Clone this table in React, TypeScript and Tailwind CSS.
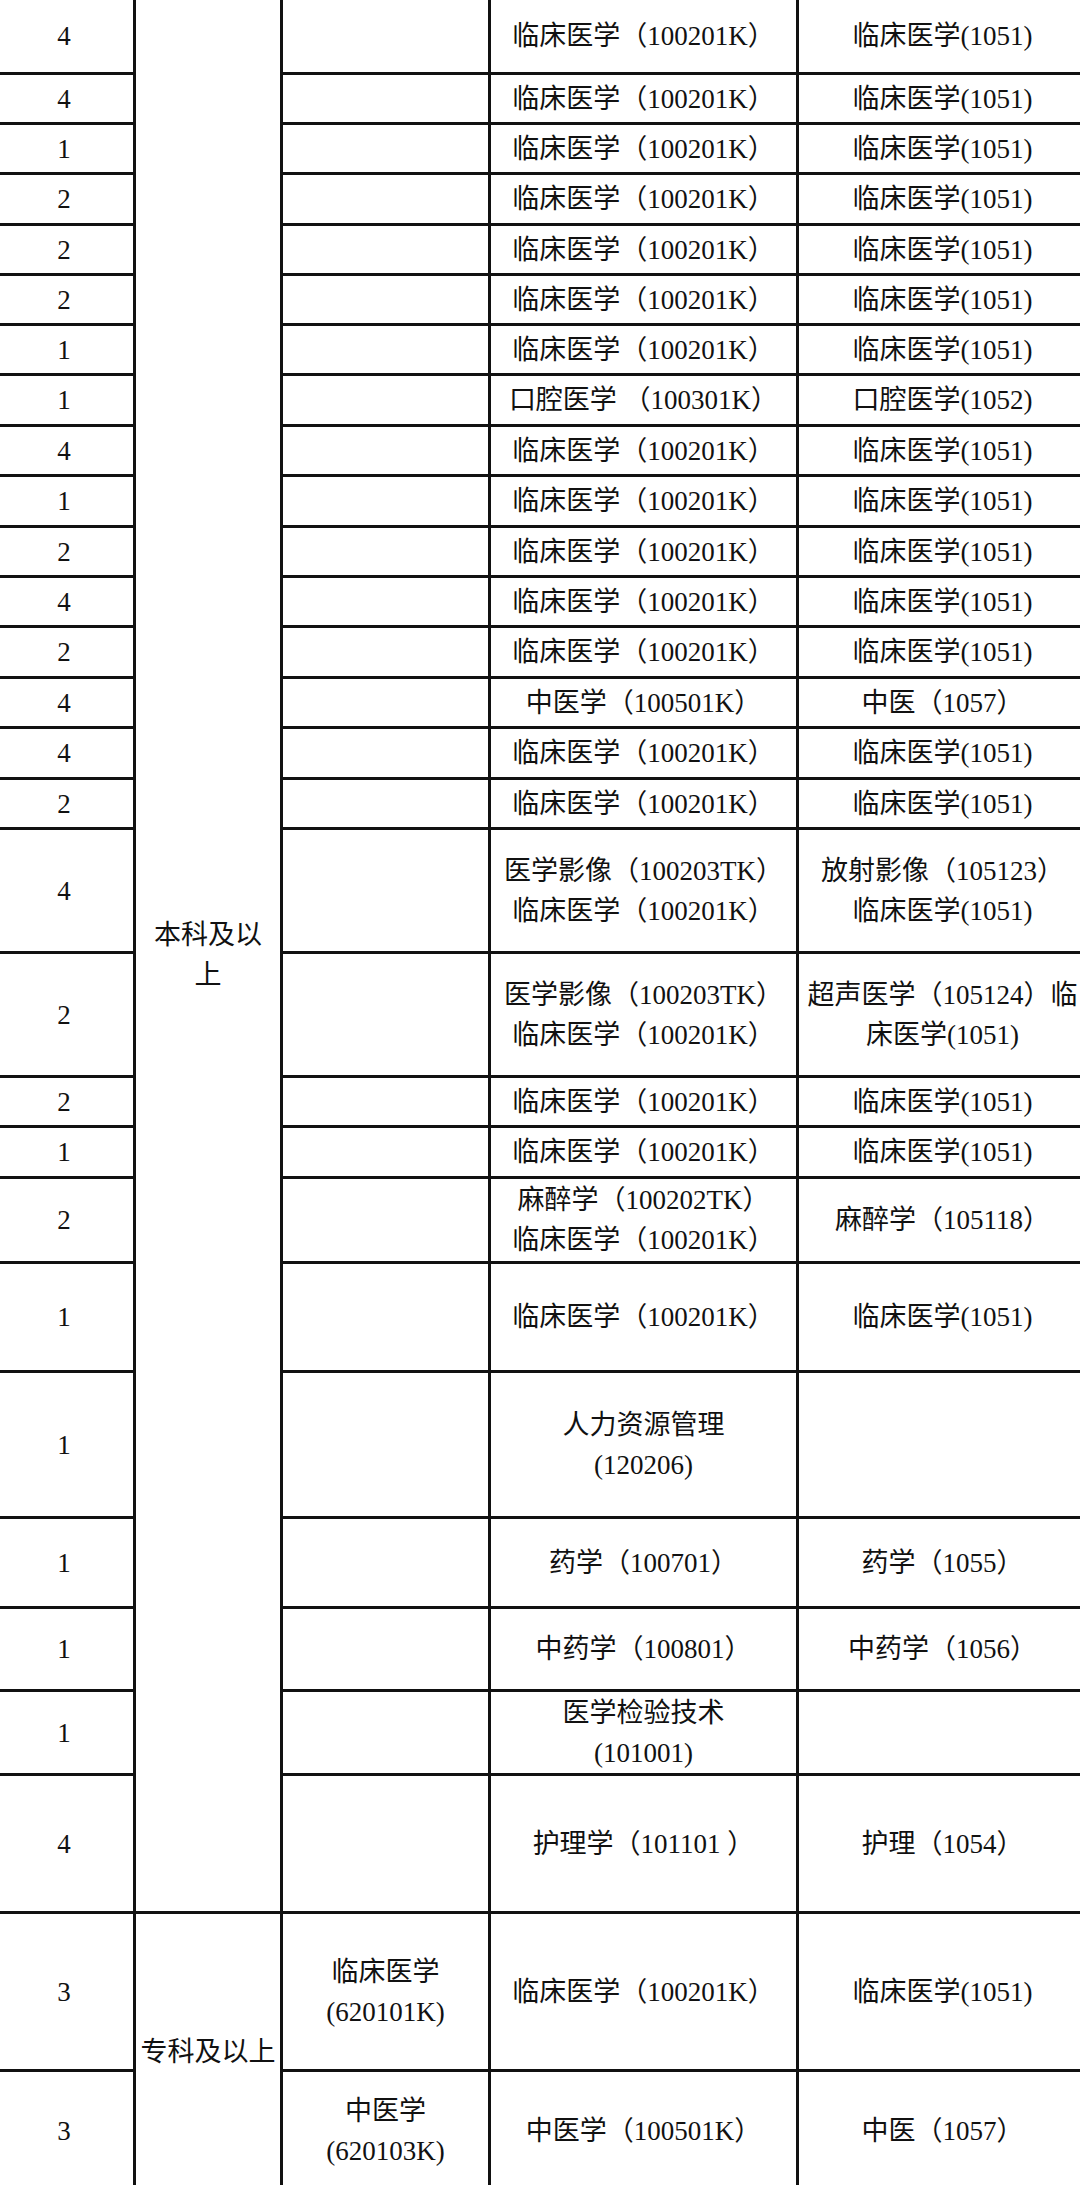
import React from "react";

type Row = { n: string; c3?: string[]; c4: string[]; c5: string[] };

const K = ["临床医学（100201K）"];
const K5 = ["临床医学(1051)"];

const rows: Row[] = [
  { n: "4", c4: K, c5: K5 },
  { n: "4", c4: K, c5: K5 },
  { n: "1", c4: K, c5: K5 },
  { n: "2", c4: K, c5: K5 },
  { n: "2", c4: K, c5: K5 },
  { n: "2", c4: K, c5: K5 },
  { n: "1", c4: K, c5: K5 },
  { n: "1", c4: ["口腔医学 （100301K）"], c5: ["口腔医学(1052)"] },
  { n: "4", c4: K, c5: K5 },
  { n: "1", c4: K, c5: K5 },
  { n: "2", c4: K, c5: K5 },
  { n: "4", c4: K, c5: K5 },
  { n: "2", c4: K, c5: K5 },
  { n: "4", c4: ["中医学（100501K）"], c5: ["中医（1057）"] },
  { n: "4", c4: K, c5: K5 },
  { n: "2", c4: K, c5: K5 },
  { n: "4", c4: ["医学影像（100203TK）", "临床医学（100201K）"], c5: ["放射影像（105123）", "临床医学(1051)"] },
  { n: "2", c4: ["医学影像（100203TK）", "临床医学（100201K）"], c5: ["超声医学（105124）临", "床医学(1051)"] },
  { n: "2", c4: K, c5: K5 },
  { n: "1", c4: K, c5: K5 },
  { n: "2", c4: ["麻醉学（100202TK）", "临床医学（100201K）"], c5: ["麻醉学（105118）"] },
  { n: "1", c4: K, c5: K5 },
  { n: "1", c4: ["人力资源管理", "(120206)"], c5: [] },
  { n: "1", c4: ["药学（100701）"], c5: ["药学（1055）"] },
  { n: "1", c4: ["中药学（100801）"], c5: ["中药学（1056）"] },
  { n: "1", c4: ["医学检验技术", "(101001)"], c5: [] },
  { n: "4", c4: ["护理学（101101 ）"], c5: ["护理（1054）"] },
  { n: "3", c3: ["临床医学", "(620101K)"], c4: K, c5: K5 },
  { n: "3", c3: ["中医学", "(620103K)"], c4: ["中医学（100501K）"], c5: ["中医（1057）"] },
];

function Cell({ lines, className = "" }: { lines?: string[]; className?: string }) {
  return (
    <div className={"bg-white flex flex-col items-center justify-center text-center overflow-hidden " + className}>
      {(lines || []).map((l, i) => (
        <div key={i} className="whitespace-pre">
          {l}
        </div>
      ))}
    </div>
  );
}

export default function App() {
  return (
    <div className="w-[1080px] h-[2185px] overflow-hidden bg-white">
      <div
        className="grid w-[1097px] ml-[-8px] mt-[-4px] p-[3px] gap-[3px] bg-[#111] text-[#111] text-[27px] leading-[40px] grid-cols-[138px_144px_205px_305px_287px] grid-rows-[73px_47px_47px_48px_47px_47px_47px_48px_47px_48px_47px_47px_48px_47px_48px_47px_121px_121px_47px_48px_82px_106px_143px_87px_80px_81px_135px_155px_117px]"
        style={{ fontFamily: '"Liberation Serif", "Noto Sans CJK SC", sans-serif' }}
      >
        {rows.map((r, i) => (
          <React.Fragment key={i}>
            <Cell lines={[r.n]} />
            {i === 0 && <Cell lines={["本科及以", "上"]} className="row-span-27" />}
            {i === 27 && <Cell lines={["专科及以上"]} className="row-span-2" />}
            <Cell lines={r.c3} />
            <Cell lines={r.c4} />
            <Cell lines={r.c5} />
          </React.Fragment>
        ))}
      </div>
    </div>
  );
}
